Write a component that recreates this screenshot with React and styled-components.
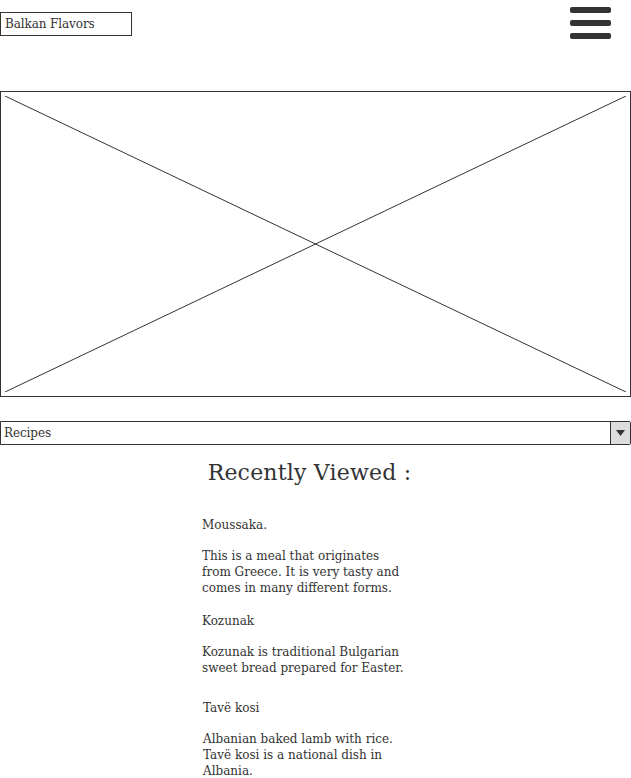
import styled, { createGlobalStyle } from 'styled-components';

const GlobalStyle = createGlobalStyle`
  html, body {
    margin: 0;
    padding: 0;
    background: #fff;
  }
  body {
    font-family: "DejaVu Serif", "Liberation Serif", serif;
    color: #333;
    overflow: hidden;
  }
`;

const Page = styled.div`
  width: 631px;
  display: flex;
  flex-direction: column;
`;

const Header = styled.header`
  display: flex;
  justify-content: space-between;
  align-items: flex-start;
  height: 91px;
  padding-right: 20px;
`;

const Logo = styled.div`
  margin-top: 12px;
  width: 126px;
  height: 22px;
  border: 1px solid #333;
  padding-left: 4px;
  font-size: 12px;
  line-height: 22px;
  letter-spacing: -0.1px;
`;

const Burger = styled.button`
  margin-top: 7px;
  width: 41px;
  padding: 0;
  border: 0;
  background: none;
  display: flex;
  flex-direction: column;
  gap: 7px;
`;

const Bar = styled.span`
  display: block;
  height: 6px;
  border-radius: 2px;
  background: #333;
`;

const Placeholder = styled.div`
  height: 306px;
  border: 1px solid #333;
  padding: 4px;
  box-sizing: border-box;
`;

const Cross = styled.svg`
  display: block;
  width: 100%;
  height: 100%;
`;

const Select = styled.div`
  margin-top: 24px;
  height: 22px;
  border: 1px solid #333;
  border-radius: 0 2px 2px 0;
  display: flex;
  font-size: 12px;
`;

const SelectLabel = styled.span`
  flex: 1;
  padding-left: 3px;
  line-height: 22px;
  letter-spacing: -0.1px;
`;

const Arrow = styled.span`
  width: 19px;
  border-left: 1px solid #333;
  background: #ddd;
  display: flex;
  align-items: center;
  justify-content: center;
`;

const Heading = styled.h2`
  margin: 14px 0 0;
  padding-right: 12px;
  text-align: center;
  font-size: 22px;
  font-weight: normal;
  line-height: 28px;
  letter-spacing: 0.2px;
`;

const List = styled.div`
  margin: 30px 0 0 202px;
  width: 204px;
  display: flex;
  flex-direction: column;
  font-size: 12px;
  line-height: 16px;
`;

const Item = styled.div`
  margin-top: ${p => p.$gap || 0}px;
  padding-left: ${p => p.$indent || 0}px;
`;

const Title = styled.p`
  margin: 0;
`;

const Desc = styled.p`
  margin: 15px 0 0;
`;

const recent = [
  { name: 'Moussaka.', text: 'This is a meal that originates from Greece. It is very tasty and comes in many different forms.', gap: 0 },
  { name: 'Kozunak', text: 'Kozunak is traditional Bulgarian sweet bread prepared for Easter.', gap: 17 },
  { name: 'Tavë kosi', text: 'Albanian baked lamb with rice. Tavë kosi is a national dish in Albania.', gap: 24, indent: 1 },
];

const App = () => {
  return (
    <Page>
      <GlobalStyle />
      <Header>
        <Logo>Balkan Flavors</Logo>
        <Burger aria-label="Menu">
          <Bar />
          <Bar />
          <Bar />
        </Burger>
      </Header>
      <Placeholder>
        <Cross viewBox="0 0 100 100" preserveAspectRatio="none">
          <line x1="0" y1="0" x2="100" y2="100" stroke="#333" strokeWidth="1" vectorEffect="non-scaling-stroke" />
          <line x1="100" y1="0" x2="0" y2="100" stroke="#333" strokeWidth="1" vectorEffect="non-scaling-stroke" />
        </Cross>
      </Placeholder>
      <Select>
        <SelectLabel>Recipes</SelectLabel>
        <Arrow>
          <svg width="9" height="6" viewBox="0 0 9 6">
            <path d="M0 0 H9 L4.5 6 Z" fill="#333" />
          </svg>
        </Arrow>
      </Select>
      <Heading>Recently Viewed :</Heading>
      <List>
        {recent.map(r => (
          <Item key={r.name} $gap={r.gap} $indent={r.indent}>
            <Title>{r.name}</Title>
            <Desc>{r.text}</Desc>
          </Item>
        ))}
      </List>
    </Page>
  );
};

export default App;
